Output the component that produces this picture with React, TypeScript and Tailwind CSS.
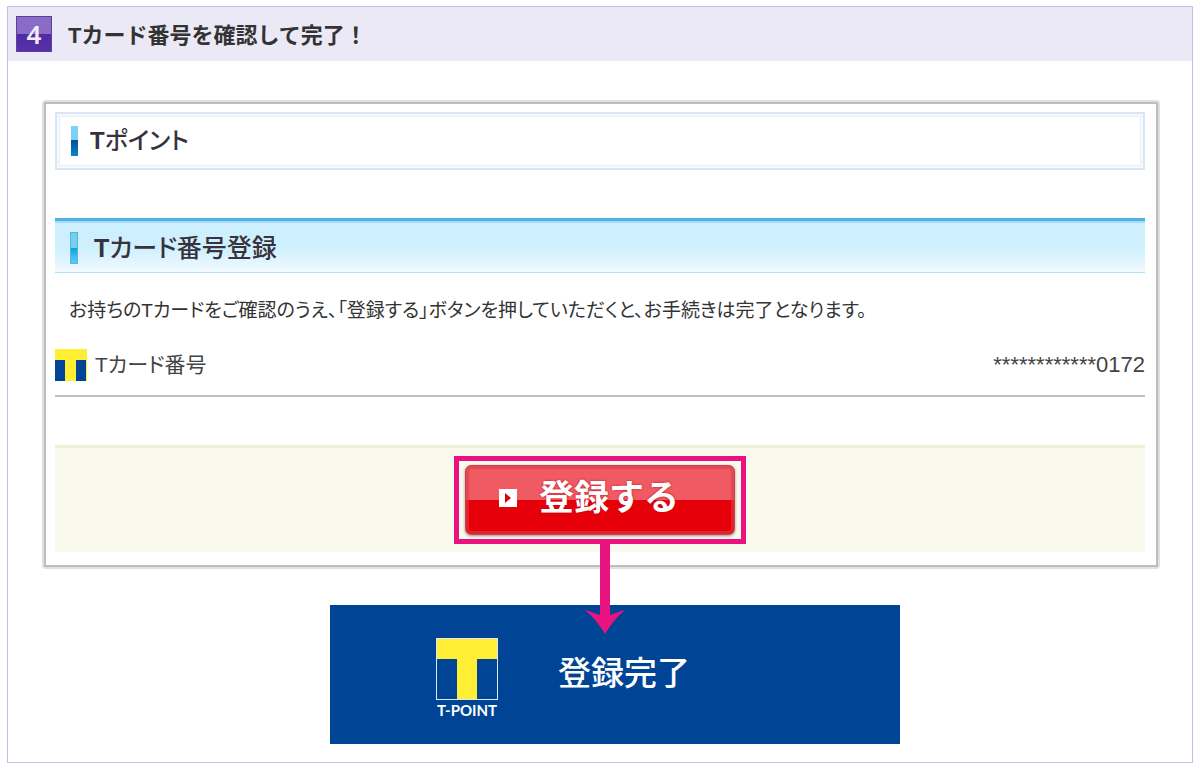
import React from 'react'

interface SectionHeadingProps {
  children: React.ReactNode
}

function TMark() {
  return (
    <svg viewBox="0 0 32 32" className="size-8 shrink-0" aria-hidden="true">
      <rect width="32" height="32" fill="#ffee33" />
      <rect x="0" y="11" width="10" height="21" fill="#004595" />
      <rect x="21" y="11" width="10" height="21" fill="#004595" />
    </svg>
  )
}

function TPointLogo() {
  return (
    <div className="flex flex-col items-center">
      <svg viewBox="0 0 62 62" className="size-[62px]" aria-hidden="true">
        <rect x="0.5" y="0.5" width="61" height="61" fill="#004595" stroke="#dce8f5" />
        <rect x="1" y="1" width="60" height="20" fill="#ffee33" />
        <rect x="21" y="20" width="20" height="41" fill="#ffee33" />
      </svg>
      <span className="font-['Lato',sans-serif] text-[15px] leading-5 font-bold text-white">T-POINT</span>
    </div>
  )
}

function DownArrow() {
  return (
    <svg
      viewBox="0 0 42 95"
      className="absolute top-full left-1/2 z-10 h-[95px] w-[42px] -translate-x-4"
      fill="#e8137f"
      aria-hidden="true"
    >
      <path d="M16 0h10v76l15.500-5.500Q30 80 21 95Q12 80 0.500 70.500L16 76Z" />
    </svg>
  )
}

function PageHeading({ children }: SectionHeadingProps) {
  return (
    <div className="border-2 border-[#dbe6f4] bg-[#f4f9fe] p-0.5">
      <div className="flex h-[50px] items-center gap-3 border border-[#e6effa] bg-white pl-[11px]">
        <span className="h-[30px] w-[7px] bg-linear-to-b from-[#7fd0f7] from-45% via-[#00508f] via-45% to-[#0c86cc]" />
        <h2 className="text-[24px] leading-8 font-medium text-[#38323c]">{children}</h2>
      </div>
    </div>
  )
}

function SectionHeading({ children }: SectionHeadingProps) {
  return (
    <div className="border-t-[3px] border-b border-t-[#4fb0e6] border-b-[#b3e6fa]">
      <div className="flex h-[51px] items-center gap-4 border-t-2 border-[#a5dcf6] bg-linear-to-b from-[#ceeffe] from-50% to-[#f1faff] pl-[15px]">
        <span className="h-8 w-2 border border-[#4db8e6] bg-linear-to-b from-[#7dccec] from-50% via-[#00a0e0] via-50% to-[#5cccf6]" />
        <h3 className="text-[25px] leading-8 font-medium text-[#38323c]">{children}</h3>
      </div>
    </div>
  )
}

export default function App() {
  return (
    <main className="bg-white px-[7px] pt-[6px] pb-[5px] font-['Liberation_Sans','Noto_Sans_CJK_JP',sans-serif] text-[#333]">
      <section className="border border-[#c3bee8]">
        <header className="flex h-[54px] items-center gap-4 bg-[#ebe9f6] px-2">
          <span className="flex size-9 items-center justify-center border border-[#5b3fa6] bg-linear-to-b from-[#8a6cc4] from-50% via-[#4f2aa3] via-50% to-[#5731ab] font-['Noto_Sans',sans-serif] text-[26px] leading-8 font-semibold text-[#f1edf8]">
            4
          </span>
          <h1 className="pt-1 text-[22px] leading-8 font-bold">Tカード番号を確認して完了！</h1>
        </header>

        <div className="pt-[39px] pr-8 pb-[18px] pl-[34px]">
          <div className="rounded-sm border-2 border-[#e0e0e0]">
            <div className="border-2 border-[#bdbdbd] pt-2 pr-[11px] pb-[13px] pl-[9px] [font-feature-settings:'palt']">
              <PageHeading>
                <b>T</b>ポイント
              </PageHeading>

              <div className="mt-12">
                <SectionHeading>
                  <b>T</b>カード番号登録
                </SectionHeading>
              </div>

              <p className="mt-6 px-[14px] text-[19px] leading-7">
                お持ちのTカードをご確認のうえ、「登録する」ボタンを押していただくと、お手続きは完了となります。
              </p>

              <dl className="mt-6 flex h-12 items-start justify-between border-b-2 border-[#bfbfbf] leading-8 text-[#444]">
                <dt className="flex items-center gap-2 text-[21px]">
                  <TMark />
                  Tカード番号
                </dt>
                <dd className="text-[22px]">************0172</dd>
              </dl>

              <div className="mt-12 flex justify-center border-t-[3px] border-[#f0f0da] bg-[#f9f9ed] pt-2 pb-2">
                <div className="relative border-[5px] border-[#e8137f] px-1.5 py-1">
                  <button
                    type="button"
                    className="flex h-[70px] w-[270px] items-center gap-[22px] rounded-md border border-[#d0404a] bg-linear-to-b from-[#f05a63] from-50% via-[#e60009] via-50% to-[#e60009] pb-1 pl-[33px] text-[35px] leading-10 font-bold text-white shadow-[inset_0_0_0_3px_rgba(220,60,70,0.6),0_1px_3px_rgba(0,0,0,0.4)] [font-feature-settings:normal] text-shadow-[0_0_2px_#b80010]"
                  >
                    <svg viewBox="0 0 18 18" className="size-[18px] shrink-0" aria-hidden="true">
                      <rect width="18" height="18" fill="#fff" />
                      <path d="M6 4L12 9L6 14Z" fill="#d7000f" />
                    </svg>
                    登録する
                  </button>
                  <DownArrow />
                </div>
              </div>
            </div>
          </div>

          <div className="mt-9 flex justify-center pl-7">
            <div className="flex h-[139px] w-[570px] gap-[60px] bg-[#004595] pt-[33px] pl-[106px]">
              <TPointLogo />
              <p className="pt-4 text-[33px] leading-10 font-medium text-white">登録完了</p>
            </div>
          </div>
        </div>
      </section>
    </main>
  )
}
